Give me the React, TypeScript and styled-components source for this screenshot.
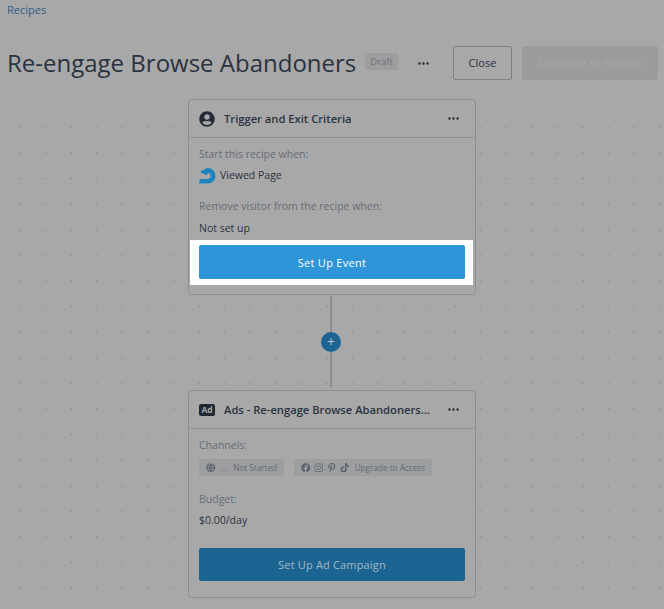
import React from 'react';
import styled, { createGlobalStyle } from 'styled-components';
import { FaFacebook, FaGlobe, FaInstagram, FaPinterestP, FaTiktok, FaUserCircle } from 'react-icons/fa';
import { BsThreeDots } from 'react-icons/bs';

const GlobalStyle = createGlobalStyle`
  html, body {
    margin: 0;
    padding: 0;
    background: #a8a8a8;
    font-family: "Open Sans", "Liberation Sans", sans-serif;
  }
`;

const Page = styled.div`
  width: 664px;
  height: 609px;
  overflow: hidden;
  background: #a8a8a8;
`;

const Breadcrumb = styled.a`
  display: block;
  padding: 2px 0 0 7px;
  height: 16px;
  font-size: 11px;
  line-height: 16px;
  color: #2c5f88;
`;

const Header = styled.div`
  display: flex;
  align-items: center;
  height: 34px;
  margin-top: 28px;
  padding: 0 6px 0 7px;
`;

const Title = styled.h1`
  margin: -1px 0 0;
  font-size: 24px;
  font-weight: 400;
  line-height: 32px;
  color: #2a3341;
  white-space: nowrap;
`;

const Badge = styled.span`
  margin-left: 9px;
  margin-top: -3px;
  padding: 0 5px;
  height: 17px;
  font-size: 9.5px;
  line-height: 17px;
  background: #9e9e9f;
  color: #6a707a;
  border-radius: 2px;
`;

const MoreButton = styled.span`
  display: flex;
  color: #252c38;
  font-size: 13px;
`;

const HeaderMore = styled(MoreButton)`
  margin-left: 19px;
  margin-right: 23px;
`;

const HeaderButton = styled.div<{ $disabled?: boolean }>`
  height: 34px;
  box-sizing: border-box;
  border-radius: 2px;
  font-size: 11px;
  font-weight: 500;
  line-height: 32px;
  text-align: center;
  border: 1px solid ${(p) => (p.$disabled ? '#9c9c9c' : '#7d8087')};
  background: ${(p) => (p.$disabled ? '#9c9c9c' : 'transparent')};
  color: ${(p) => (p.$disabled ? '#a8a8a8' : '#2a3341')};
  letter-spacing: ${(p) => (p.$disabled ? '0.35px' : '0')};
  width: ${(p) => (p.$disabled ? '136px' : '59px')};
  margin-left: ${(p) => (p.$disabled ? '10px' : '0')};
`;

const Canvas = styled.div`
  height: 529px;
  padding-top: 19px;
  box-sizing: border-box;
  display: flex;
  flex-direction: column;
  align-items: center;
  background-image:
    linear-gradient(#a8a8a8, #a8a8a8),
    radial-gradient(circle at center, #989898 0.7px, transparent 1px);
  background-size: 100% 30px, 25.6px 25.6px;
  background-position: 0 0, 7px 9.1px;
  background-repeat: no-repeat, repeat;
`;

const Card = styled.section<{ $height: number }>`
  width: 288px;
  height: ${(p) => p.$height}px;
  box-sizing: border-box;
  border: 1px solid #8f8f8f;
  border-radius: 4px;
  background: #a8a8a8;
  display: flex;
  flex-direction: column;
`;

const CardHeader = styled.div`
  display: flex;
  align-items: center;
  height: 38px;
  flex-shrink: 0;
  box-sizing: border-box;
  padding: 0 15px 0 9px;
  border-bottom: 1px solid #8f8f8f;
`;

const CardIcon = styled.span`
  display: flex;
  justify-content: center;
  width: 18px;
  font-size: 16px;
  color: #252c38;
  margin-right: 8px;
`;

const AdIcon = styled.span`
  width: 16px;
  height: 12px;
  border-radius: 2px;
  background: #1f2733;
  color: #a8a8a8;
  font-size: 8.5px;
  font-weight: 700;
  line-height: 12px;
  text-align: center;
`;

const CardTitle = styled.h2`
  flex: 1;
  margin: 0;
  font-size: 11.2px;
  font-weight: 600;
  color: #2a3341;
  white-space: nowrap;
`;

const CardBody = styled.div`
  padding: 0 10px;
  flex: 1;
  display: flex;
  flex-direction: column;
`;

const Label = styled.div<{ $top: number }>`
  margin-top: ${(p) => p.$top}px;
  font-size: 10.5px;
  line-height: 16px;
  color: #666c77;
`;

const Value = styled.div<{ $top: number }>`
  display: flex;
  align-items: center;
  gap: 4px;
  margin-top: ${(p) => p.$top}px;
  font-size: 10.5px;
  line-height: 16px;
  color: #2a3341;
`;

const ButtonHighlight = styled.div`
  margin: 4px -8px 0 -9px;
  padding: 5px 8px 6px 9px;
  background: #ffffff;
`;

const PrimaryButton = styled.div<{ $dim?: boolean }>`
  height: ${(p) => (p.$dim ? 33 : 34)}px;
  margin-top: ${(p) => (p.$dim ? 20 : 0)}px;
  border-radius: 2px;
  background: ${(p) => (p.$dim ? '#1c6592' : '#2d95d8')};
  color: ${(p) => (p.$dim ? '#a3b6c4' : '#ffffff')};
  font-size: 11px;
  font-weight: 500;
  line-height: ${(p) => (p.$dim ? 33 : 35)}px;
  text-align: center;
  letter-spacing: ${(p) => (p.$dim ? '0.17px' : '0.3px')};
`;

const Connector = styled.div`
  position: relative;
  width: 2px;
  height: 91px;
  margin: 1px 0 3px -2px;
  background: #8c8c8c;
`;

const PlusButton = styled.span`
  position: absolute;
  left: -9px;
  top: 36px;
  width: 20px;
  height: 20px;
  border-radius: 50%;
  background: #1c6592;
  color: #b5c5d0;
  font-size: 14px;
  line-height: 20px;
  text-align: center;
`;

const ChipRow = styled.div`
  display: flex;
  gap: 10px;
  margin-top: 6px;
`;

const Chip = styled.div`
  display: flex;
  align-items: center;
  height: 17px;
  padding: 0 7px;
  background: #9d9ea0;
  border-radius: 1px;
  color: #656b75;
  font-size: 8.2px;
  white-space: nowrap;
`;

const ChipIcons = styled.span`
  display: flex;
  align-items: center;
  gap: 3.5px;
  font-size: 9.5px;
  margin-right: 5px;
  color: #5f6570;
`;

const ChipEllipsis = styled.span`
  margin: 0 5px 0 0;
  letter-spacing: 0.4px;
`;

const LogoSvg = styled.svg`
  transform: translateY(1px);
`;

const DripLogo = () => (
  <LogoSvg width="17" height="16" viewBox="0 0 17 16">
    <path
      fill="#1d83bf"
      d="M1 4 L8 0 C13 0 16.5 3 16.5 8 C16.5 12.5 13 15.5 8.5 15.5 L0 15.5 L0.8 11 L8.5 11 C10.6 11 11.6 9.6 11.6 8 C11.6 6.3 10.4 5 8.6 5 L8 7.5 Z"
    />
  </LogoSvg>
);

export default function App() {
  return (
    <Page>
      <GlobalStyle />
      <Breadcrumb>Recipes</Breadcrumb>
      <Header>
        <Title>Re-engage Browse Abandoners</Title>
        <Badge>Draft</Badge>
        <HeaderMore><BsThreeDots /></HeaderMore>
        <HeaderButton>Close</HeaderButton>
        <HeaderButton $disabled>Continue to Review</HeaderButton>
      </Header>
      <Canvas>
        <Card $height={196}>
          <CardHeader>
            <CardIcon><FaUserCircle /></CardIcon>
            <CardTitle>Trigger and Exit Criteria</CardTitle>
            <MoreButton><BsThreeDots /></MoreButton>
          </CardHeader>
          <CardBody>
            <Label $top={8}>Start this recipe when:</Label>
            <Value $top={5}><DripLogo /> Viewed Page</Value>
            <Label $top={15}>Remove visitor from the recipe when:</Label>
            <Value $top={6}>Not set up</Value>
            <ButtonHighlight>
              <PrimaryButton>Set Up Event</PrimaryButton>
            </ButtonHighlight>
          </CardBody>
        </Card>
        <Connector><PlusButton>+</PlusButton></Connector>
        <Card $height={208}>
          <CardHeader>
            <CardIcon><AdIcon>Ad</AdIcon></CardIcon>
            <CardTitle>Ads - Re-engage Browse Abandoners...</CardTitle>
            <MoreButton><BsThreeDots /></MoreButton>
          </CardHeader>
          <CardBody>
            <Label $top={8}>Channels:</Label>
            <ChipRow>
              <Chip>
                <ChipIcons><FaGlobe /></ChipIcons>
                <ChipEllipsis>...</ChipEllipsis>
                Not Started
              </Chip>
              <Chip>
                <ChipIcons>
                  <FaFacebook />
                  <FaInstagram />
                  <FaPinterestP />
                  <FaTiktok />
                </ChipIcons>
                Upgrade to Access
              </Chip>
            </ChipRow>
            <Label $top={15}>Budget:</Label>
            <Value $top={5}>$0.00/day</Value>
            <PrimaryButton $dim>Set Up Ad Campaign</PrimaryButton>
          </CardBody>
        </Card>
      </Canvas>
    </Page>
  );
}
